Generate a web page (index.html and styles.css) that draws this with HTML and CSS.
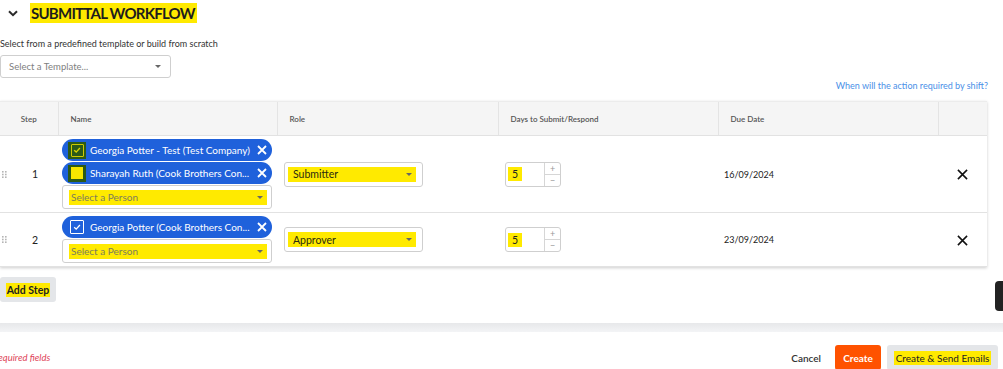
FILE: index.html
```html
<!DOCTYPE html>
<html lang="en">
<head>
<meta charset="utf-8">
<title>Submittal Workflow</title>
<link rel="stylesheet" href="styles.css">
</head>
<body>
<div class="page">
  <div class="section-head">
    <svg class="chev" viewBox="0 0 10 7"><path d="M1 1.2 L5 5.2 L9 1.2" fill="none" stroke="#2a2a2a" stroke-width="2"/></svg>
    <h2 class="title"><span class="hl">SUBMITTAL WORKFLOW</span></h2>
  </div>
  <p class="help">Select from a predefined template or build from scratch</p>
  <div class="select template"><span>Select a Template...</span><span class="caret"></span></div>
  <div class="shift-row"><a class="shift-link" href="#">When will the action required by shift?</a></div>

  <table class="steps">
    <colgroup>
      <col class="c-step"><col class="c-name"><col class="c-role"><col class="c-days"><col class="c-due"><col class="c-act">
    </colgroup>
    <thead>
      <tr>
        <th class="th-step">Step</th>
        <th>Name</th>
        <th>Role</th>
        <th>Days to Submit/Respond</th>
        <th>Due Date</th>
        <th></th>
      </tr>
    </thead>
    <tbody>
      <tr class="row1">
        <td class="td-step"><div class="stepcell"><svg class="grip" viewBox="0 0 5 7"><g fill="#b5b5b5"><rect x="0" y="0" width="1.6" height="1.6"/><rect x="3" y="0" width="1.6" height="1.6"/><rect x="0" y="2.7" width="1.6" height="1.6"/><rect x="3" y="2.7" width="1.6" height="1.6"/><rect x="0" y="5.4" width="1.6" height="1.6"/><rect x="3" y="5.4" width="1.6" height="1.6"/></g></svg><span class="num">1</span></div></td>
        <td class="td-name">
          <div class="chip">
            <span class="cbw"><span class="cb cb-olive"><svg viewBox="0 0 10 10"><path d="M2.2 5.2 L4.2 7.1 L7.9 3" fill="none" stroke="#d9d400" stroke-width="1.4"/></svg></span></span>
            <span class="chip-text">Georgia Potter - Test (Test Company)</span>
            <svg class="chip-x" viewBox="0 0 10 10"><path d="M1 1 L9 9 M9 1 L1 9" stroke="#fff" stroke-width="1.8"/></svg>
          </div>
          <div class="chip">
            <span class="cbw"><span class="cb-fill"></span></span>
            <span class="chip-text">Sharayah Ruth (Cook Brothers Con...</span>
            <svg class="chip-x" viewBox="0 0 10 10"><path d="M1 1 L9 9 M9 1 L1 9" stroke="#fff" stroke-width="1.8"/></svg>
          </div>
          <div class="select person"><span class="hl hl-sel"><span>Select a Person</span><span class="caret"></span></span></div>
        </td>
        <td class="td-role"><div class="select role"><span class="hl hl-sel"><span>Submitter</span><span class="caret"></span></span></div></td>
        <td class="td-days"><div class="numbox"><span class="numval"><span class="hl">5</span></span><span class="spin"><span>+</span><span>−</span></span></div></td>
        <td class="td-due">16/09/2024</td>
        <td class="td-act"><svg class="rm" viewBox="0 0 12 12"><path d="M1 1 L11 11 M11 1 L1 11" stroke="#111" stroke-width="1.7"/></svg></td>
      </tr>
      <tr class="row2">
        <td class="td-step"><div class="stepcell"><svg class="grip" viewBox="0 0 5 7"><g fill="#b5b5b5"><rect x="0" y="0" width="1.6" height="1.6"/><rect x="3" y="0" width="1.6" height="1.6"/><rect x="0" y="2.7" width="1.6" height="1.6"/><rect x="3" y="2.7" width="1.6" height="1.6"/><rect x="0" y="5.4" width="1.6" height="1.6"/><rect x="3" y="5.4" width="1.6" height="1.6"/></g></svg><span class="num">2</span></div></td>
        <td class="td-name">
          <div class="chip">
            <span class="cb cb-white"><svg viewBox="0 0 10 10"><path d="M2.2 5.2 L4.2 7.1 L7.9 3" fill="none" stroke="#fff" stroke-width="1.3"/></svg></span>
            <span class="chip-text">Georgia Potter (Cook Brothers Con...</span>
            <svg class="chip-x" viewBox="0 0 10 10"><path d="M1 1 L9 9 M9 1 L1 9" stroke="#fff" stroke-width="1.8"/></svg>
          </div>
          <div class="select person"><span class="hl hl-sel"><span>Select a Person</span><span class="caret"></span></span></div>
        </td>
        <td class="td-role"><div class="select role"><span class="hl hl-sel"><span>Approver</span><span class="caret"></span></span></div></td>
        <td class="td-days"><div class="numbox"><span class="numval"><span class="hl">5</span></span><span class="spin"><span>+</span><span>−</span></span></div></td>
        <td class="td-due">23/09/2024</td>
        <td class="td-act"><svg class="rm" viewBox="0 0 12 12"><path d="M1 1 L11 11 M11 1 L1 11" stroke="#111" stroke-width="1.7"/></svg></td>
      </tr>
    </tbody>
  </table>

  <div class="add-row"><button class="btn btn-grey add"><span class="hl">Add Step</span></button></div>

  <div class="band"></div>

  <footer class="foot">
    <span class="req">Required fields</span>
    <div class="actions">
      <button class="btn btn-link">Cancel</button>
      <button class="btn btn-orange">Create</button>
      <button class="btn btn-grey send"><span class="hl">Create &amp; Send Emails</span></button>
    </div>
  </footer>

  <div class="side-tab"></div>
</div>
</body>
</html>
```

FILE: styles.css
```css
* { box-sizing: border-box; margin: 0; padding: 0; }
html, body { background: #fff; }
body {
  font-family: Lato, "Open Sans", "Liberation Sans", sans-serif;
  color: #333;
  width: 1003px;
  height: 369px;
  overflow: hidden;
}
.page { position: relative; width: 1003px; height: 369px; overflow: hidden; }

.hl { background: #ffea00; }

.section-head {
  display: flex;
  align-items: center;
  height: 26px;
  padding-left: 8px;
  gap: 12px;
}
.chev { width: 10px; height: 7px; }
.title { font-size: 15px; font-weight: 700; color: #1d1d1d; line-height: 19px; letter-spacing: -0.75px; }
.title .hl { padding: 1px 2px 1px 1px; }

.help { font-size: 9px; line-height: 14px; margin-top: 11px; color: #333; }

.select {
  display: flex;
  align-items: center;
  justify-content: space-between;
  border: 1px solid #cfcfcf;
  border-radius: 3px;
  background: #fff;
  font-size: 10.5px;
  color: #808080;
}
.caret {
  width: 0; height: 0;
  border-left: 3px solid transparent;
  border-right: 3px solid transparent;
  border-top: 3px solid #666;
}
.template { width: 171px; height: 23px; margin-top: 4px; padding: 0 9px 0 8px; font-size: 9.5px; }

.shift-row {
  display: flex;
  justify-content: flex-end;
  padding-right: 15px;
  margin-top: 1px;
  height: 14px;
  line-height: 14px;
}
.shift-link { font-size: 9px; color: #4a8fe7; text-decoration: none; }

.steps {
  margin-top: 8px;
  width: 987px;
  border-collapse: collapse;
  table-layout: fixed;
  box-shadow: 0 1px 3px rgba(0,0,0,0.2);
}
.c-step { width: 58px; }
.c-name { width: 219px; }
.c-role { width: 221px; }
.c-days { width: 220px; }
.c-due { width: 220px; }
.c-act { width: 49px; }

.steps th {
  height: 34px;
  background: #f5f5f5;
  font-size: 8px;
  font-weight: 600;
  color: #555;
  text-align: left;
  padding-left: 12px;
  border-left: 1px solid #e4e4e4;
  border-bottom: 1px solid #e2e2e2;
  border-top: 1px solid #ececec;
}
.steps th:first-child { border-left: none; }
.steps th.th-step { text-align: center; padding-left: 0; }

.steps td { vertical-align: middle; border-bottom: 1px solid #e2e2e2; font-size: 10.5px; color: #222; }
.row1 td { height: 76px; }
.row2 td { height: 54px; }

.stepcell { display: flex; align-items: center; padding-left: 2px; }
.grip { width: 5px; height: 7px; }
.num { margin-left: 25px; font-size: 10.5px; color: #222; }

.td-name { padding: 3px 0 3px 4px; }
.chip {
  display: flex;
  align-items: center;
  width: 210px;
  height: 22px;
  margin-bottom: 1px;
  padding: 0 5px 0 6px;
  border-radius: 11px;
  background: #1f61db;
  color: #fff;
  font-size: 10px;
}
.chip-text { flex: 1; margin-left: 4px; white-space: nowrap; overflow: hidden; }
.chip-x { width: 10px; height: 10px; flex: none; }
.cbw {
  width: 18px; height: 17px;
  background: #2b5a17;
  display: flex; align-items: center; justify-content: center;
  flex: none;
}
.cb { width: 13px; height: 13px; display: flex; align-items: center; justify-content: center; flex: none; border-radius: 1px; }
.cb svg { width: 10px; height: 10px; }
.cb-olive { border: 1.4px solid #cfc900; }
.cb-white { border: 1.3px solid #fff; margin-left: 2px; width: 14px; height: 14px; margin-right: 2px; }
.cb-fill { width: 12px; height: 12px; background: #f6e600; }

.person { width: 210px; height: 24px; padding: 0 4px 0 6px; font-size: 10px; }
.hl-sel { flex: 1; display: flex; align-items: center; justify-content: space-between; height: 15px; padding: 0 4px 0 2px; color: #7d7d5c; }

.td-role { padding-left: 7px; }
.role { width: 139px; height: 25px; padding: 0 6px 0 3px; }
.role .hl-sel { color: #2b2b10; padding-left: 5px; }

.td-days { padding-left: 7px; }
.numbox {
  display: flex;
  width: 56px;
  height: 25px;
  border: 1px solid #cfcfcf;
  border-radius: 3px;
  background: #fff;
}
.numval { flex: 1; display: flex; align-items: center; padding-left: 2px; font-size: 10.5px; }
.numval .hl { padding: 1px 4px; }
.spin { width: 16px; border-left: 1px solid #d6d6d6; display: flex; flex-direction: column; }
.spin span { flex: 1; display: flex; align-items: center; justify-content: center; font-size: 9px; color: #999; line-height: 1; }
.spin span + span { border-top: 1px solid #d6d6d6; }

.steps td.td-due { padding-left: 6px; font-size: 9px; }
.td-act { text-align: center; }
.rm { width: 11px; height: 11px; display: inline-block; vertical-align: middle; }

.btn {
  font-family: inherit;
  border: none;
  border-radius: 3px;
  font-size: 10.5px;
  cursor: pointer;
  height: 25px;
  display: inline-flex;
  align-items: center;
  justify-content: center;
}
.btn-grey { background: #e4e6e9; color: #222; }
.add-row { margin-top: 10px; }
.add { width: 56px; font-weight: 700; }
.add .hl { padding: 1px 1px; }

.band {
  margin-top: 21px;
  height: 9px;
  background: linear-gradient(#e7e8ea, #f3f4f6);
}

.foot {
  display: flex;
  justify-content: space-between;
  align-items: center;
  padding: 13px 5px 0 0;
}
.req { font-size: 9.5px; font-style: italic; color: #e0465a; margin-left: -7px; white-space: nowrap; }
.actions { display: flex; align-items: center; gap: 6px; }
.btn-link { background: transparent; color: #333; font-weight: 600; padding: 0 8px 0 0; font-size: 10px; }
.btn-orange { background: #ff5200; color: #fff; font-weight: 700; width: 46px; font-size: 10px; }
.send { width: 111px; font-size: 10px; }
.send .hl { padding: 1px 2px; }

.side-tab {
  position: absolute;
  right: 0;
  top: 281px;
  width: 8px;
  height: 30px;
  background: #222;
  border-radius: 4px 0 0 4px;
}
```
